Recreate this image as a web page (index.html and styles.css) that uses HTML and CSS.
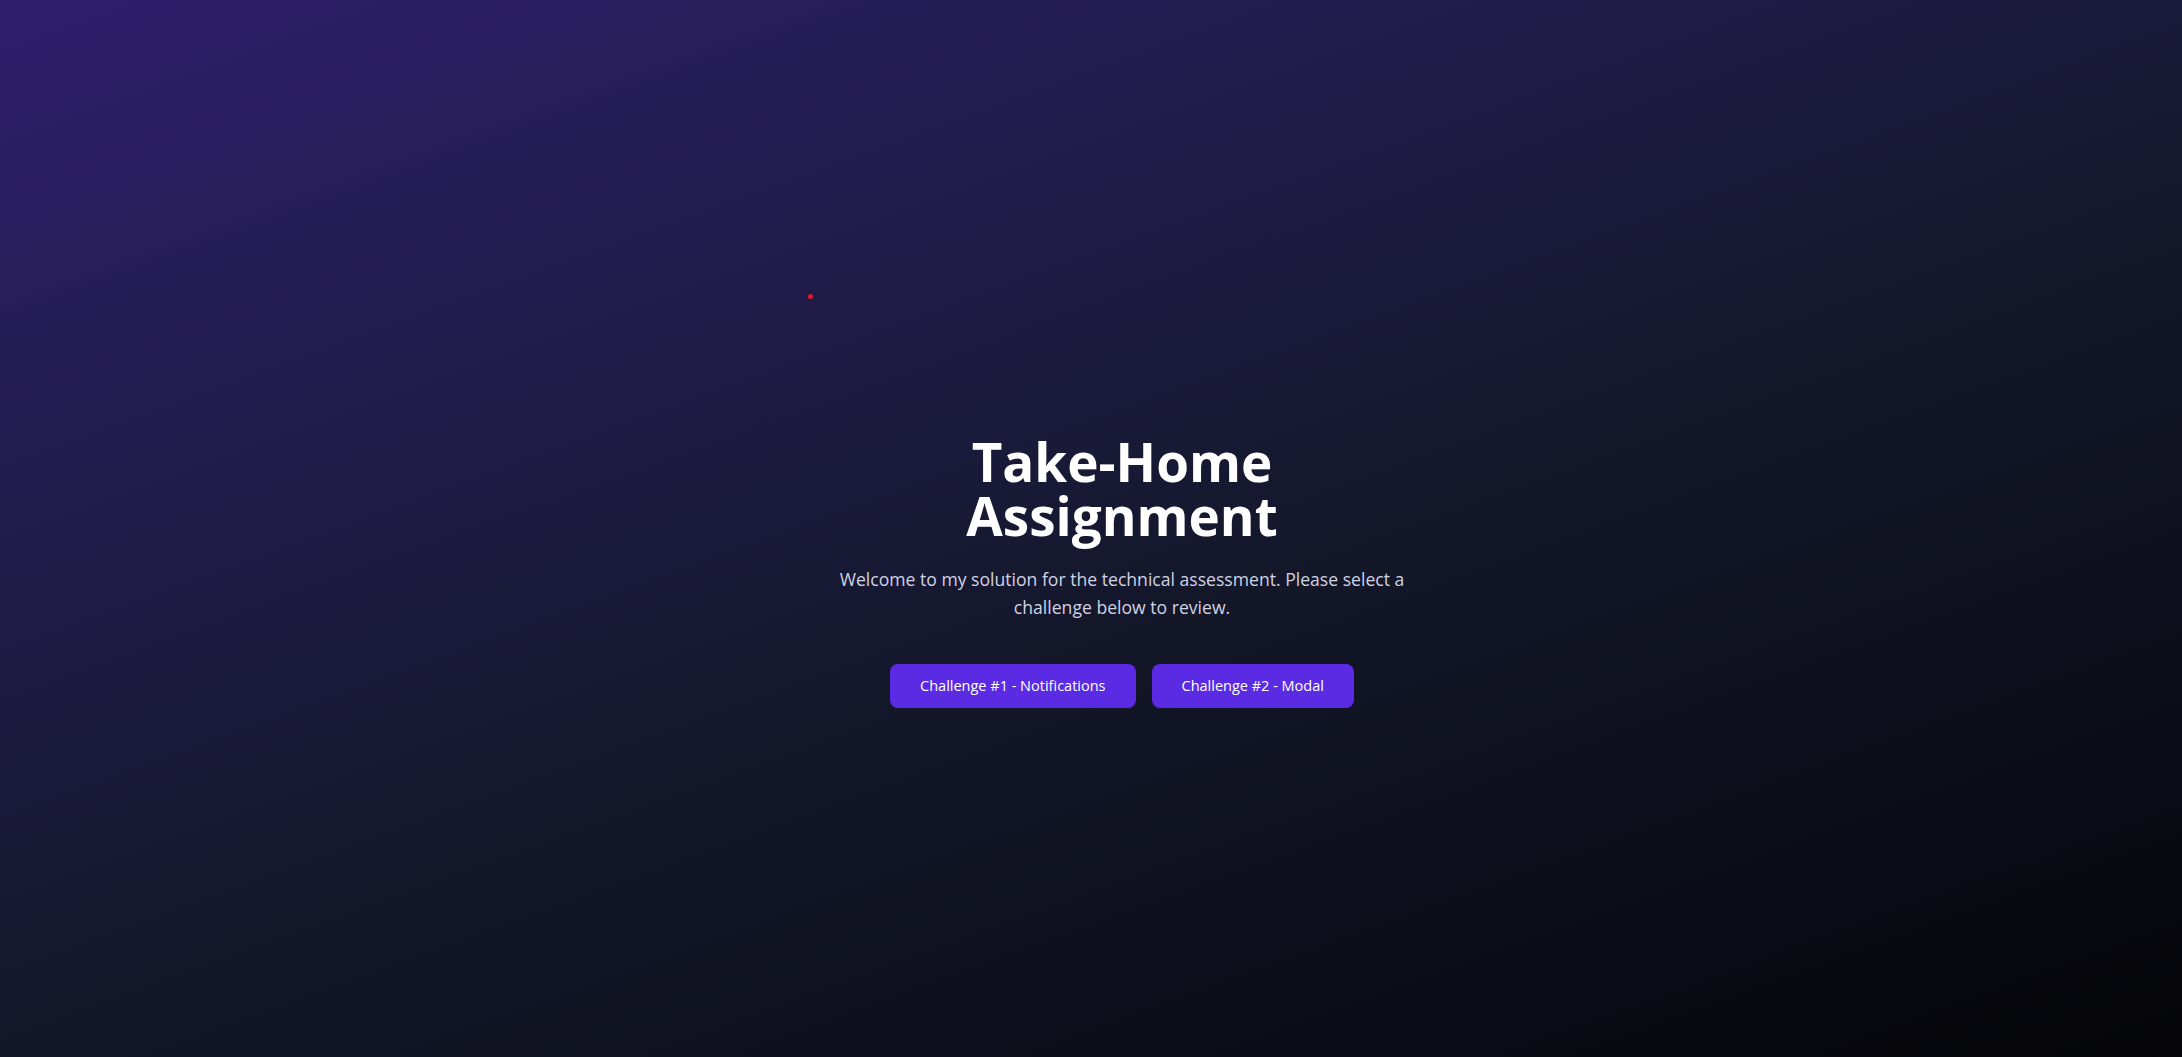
FILE: index.html
```html
<!DOCTYPE html>
<html lang="en">
<head>
<meta charset="utf-8">
<title>Take-Home Assignment</title>
<link rel="stylesheet" href="styles.css">
</head>
<body>
<main class="page">
  <span class="spark"></span>
  <section class="hero">
    <h1 class="hero-title">Take-Home Assignment</h1>
    <p class="hero-text">Welcome to my solution for the technical assessment. Please select a challenge below to review.</p>
    <div class="actions">
      <a class="btn" href="#">Challenge #1 - Notifications</a>
      <a class="btn" href="#">Challenge #2 - Modal</a>
    </div>
  </section>
</main>
</body>
</html>
```

FILE: styles.css
```css
* { box-sizing: border-box; }
html, body { margin: 0; padding: 0; height: 100%; }
body {
  font-family: "Open Sans", "Noto Sans", sans-serif;
  color: #fff;
  background: linear-gradient(160deg, #2e1f6c 0%, #211c4c 28%, #1a1a3a 43%, #131728 57%, #0f1120 70%, #050508 100%);
}
.page {
  position: relative;
  min-height: 100vh;
  display: flex;
  align-items: center;
  justify-content: center;
  padding: 85px 0 0 62px;
}
.spark {
  position: absolute;
  left: 808px;
  top: 294px;
  width: 5px;
  height: 5px;
  border-radius: 50%;
  background: #e3172b;
}
.hero {
  max-width: 600px;
  text-align: center;
  display: flex;
  flex-direction: column;
  align-items: center;
}
.hero-title {
  margin: 0;
  font-size: 53px;
  line-height: 54px;
  font-weight: 700;
  color: #fff;
}
.hero-text {
  margin: 22px 0 0;
  font-size: 17.6px;
  line-height: 28px;
  color: #cfd3e4;
}
.actions {
  margin-top: 43px;
  display: flex;
  gap: 16px;
}
.btn {
  display: inline-block;
  padding: 12px 30px;
  font-size: 14.5px;
  line-height: 20px;
  color: #fff;
  text-decoration: none;
  background: #5b2ae3;
  border-radius: 8px;
}
```
